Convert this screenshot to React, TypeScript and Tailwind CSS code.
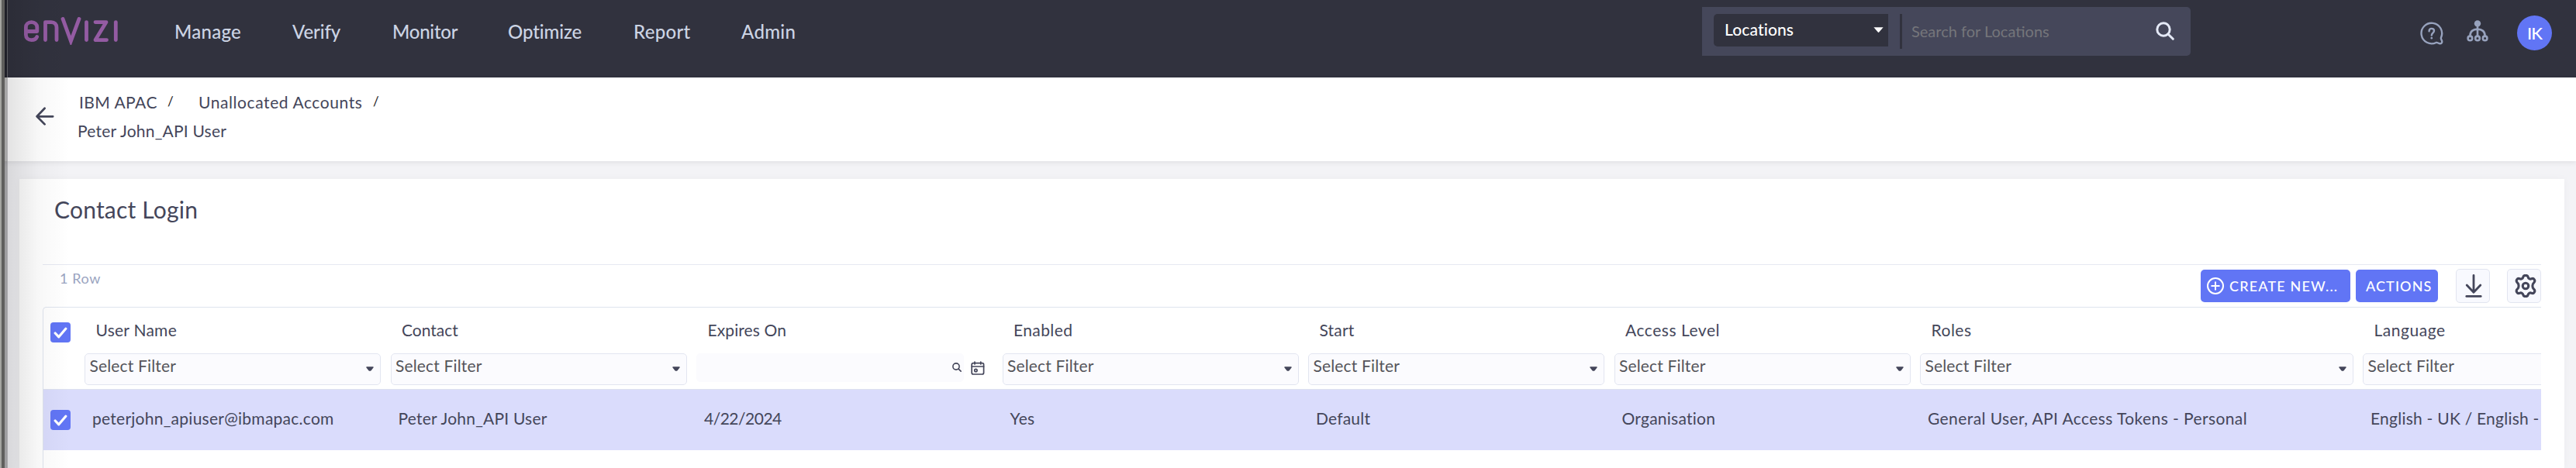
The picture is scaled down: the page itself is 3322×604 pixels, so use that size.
const NAV = [
  { label: "Manage", cls: "w-[152px] tracking-[0.25px]" },
  { label: "Verify", cls: "w-[129px] tracking-[-0.1px]" },
  { label: "Monitor", cls: "w-[149px] tracking-[-0.25px]" },
  { label: "Optimize", cls: "w-[162px] tracking-[-0.1px]" },
  { label: "Report", cls: "w-[139px] tracking-[0.3px]" },
  { label: "Admin", cls: "tracking-[0.3px]" },
];

type Column = {
  title: string;
  titleCls: string;
  value: string;
  valueCls: string;
  filter: "select" | "date";
};

const COLUMNS: Column[] = [
  { title: "User Name", titleCls: "tracking-[0.25px]", value: "peterjohn_apiuser@ibmapac.com", valueCls: "tracking-[0.26px]", filter: "select" },
  { title: "Contact", titleCls: "tracking-[0px]", value: "Peter John_API User", valueCls: "tracking-[0.22px]", filter: "select" },
  { title: "Expires On", titleCls: "tracking-[0.1px]", value: "4/22/2024", valueCls: "tracking-[-0.5px]", filter: "date" },
  { title: "Enabled", titleCls: "tracking-[0.4px]", value: "Yes", valueCls: "tracking-[0.34px]", filter: "select" },
  { title: "Start", titleCls: "tracking-[0.2px]", value: "Default", valueCls: "tracking-[0.2px]", filter: "select" },
  { title: "Access Level", titleCls: "tracking-[0.52px]", value: "Organisation", valueCls: "tracking-[0.24px]", filter: "select" },
  { title: "Roles", titleCls: "tracking-[0.5px]", value: "General User, API Access Tokens - Personal", valueCls: "tracking-[0.41px]", filter: "select" },
  { title: "Language", titleCls: "tracking-[0.55px]", value: "English - UK / English -", valueCls: "tracking-[0.24px]", filter: "select" },
];

const GRID = "grid grid-cols-[53px_repeat(6,394.5px)_571px_571px]";

function Logo() {
  return (
    <svg className="mt-[22px] h-9 w-[122px]" viewBox="0 0 122 36" fill="none" stroke="#945ba3" strokeWidth="4.8" strokeLinecap="round" strokeLinejoin="round">
      <path d="M2.4 18.5H16.8V13C16.8 9.5 13.9 6.6 9.6 6.6S2.4 9.5 2.4 13V23C2.4 27 5.3 29.6 9.6 29.6C13 29.6 15.6 28.2 16.6 25.6" />
      <path d="M27.5 29.6V6.6H35C39.4 6.6 42 9.3 42 13.5V29.6" />
      <path d="M50 2.4 60.4 31 71 2.4" strokeLinejoin="miter" />
      <path d="M80.5 6.6V29.6" />
      <path d="M92 6.6H106L92 29.6H106.5" />
      <path d="M118.3 6.6V29.6" />
    </svg>
  );
}

function Caret({ className }: { className: string }) {
  return (
    <svg className={className} viewBox="0 0 10 6" fill="currentColor">
      <path d="M1 .2H9C9.8.2 10 1 9.5 1.6L6.6 5.2C5.8 6 4.2 6 3.4 5.2L.5 1.6C0 1 .2.2 1 .2Z" />
    </svg>
  );
}

function SearchIcon({ className, stroke }: { className: string; stroke: number }) {
  return (
    <svg className={className} viewBox="0 0 24 24" fill="none" stroke="currentColor" strokeWidth={stroke} strokeLinecap="round">
      <circle cx="10" cy="10" r="8.2" />
      <path d="m16.2 16.2 6.1 6.1" />
    </svg>
  );
}

function Checkbox({ className }: { className: string }) {
  return (
    <div className={`ml-[9px] flex h-[26px] w-[26px] items-center justify-center rounded-[4px] bg-[#6175f5] ${className}`}>
      <svg className="h-[15px] w-[18px]" viewBox="0 0 18 15" fill="none" stroke="white" strokeWidth="3.2" strokeLinecap="round" strokeLinejoin="round">
        <path d="m2.2 8 4.6 4.8L15.8 2.2" />
      </svg>
    </div>
  );
}

function SelectFilter() {
  return (
    <div className="mr-[12.5px] flex h-[41px] justify-between rounded-[5px] border border-[#e2e5f0] bg-[#fbfbfe] pl-[5.5px] pr-2 pt-[3px]">
      <span className="leading-6 tracking-[0.16px] text-[#55555a]">Select Filter</span>
      <Caret className="mt-[13px] h-[6px] w-[10px] text-[#44465a]" />
    </div>
  );
}

function DateFilter() {
  return (
    <div className="flex h-[41px] text-[#44465a]">
      <div className="flex h-[37px] w-[345px] justify-end rounded-[5px] bg-[#fbfbfe] pr-[3px] pt-3">
        <SearchIcon className="h-3 w-3" stroke={3.2} />
      </div>
      <svg className="ml-[9px] mt-[10px] h-[18px] w-[18px]" viewBox="0 0 18 18" fill="none" stroke="currentColor" strokeWidth="1.7" strokeLinecap="round">
        <rect x="1.2" y="2.6" width="15.4" height="14.4" rx="2" />
        <path d="M1.2 7H16.6M5 1V4M12.8 1V4" />
        <circle cx="6.4" cy="12" r="1.7" />
      </svg>
    </div>
  );
}

function Header() {
  return (
    <header className="flex h-[100px] items-start bg-[#31323e] pl-[31px]">
      <Logo />
      <nav className="flex pl-[72px] pt-[27px] text-[24px] font-medium leading-7 text-[#ccd4e4]">
        {NAV.map((n) => (
          <span key={n.label} className={n.cls}>{n.label}</span>
        ))}
      </nav>
      <div className="ml-auto mt-[9px] flex h-[63px] w-[630px] rounded-r-[5px] bg-[#45475a] pl-[15px] pr-[21px] pt-[9px]">
        <div className="flex h-[42px] w-[225px] justify-between rounded-l-[5px] bg-[#31323e] pl-[14px] pr-[6px] text-white">
          <span className="pt-[8px] text-[21px] font-medium leading-6 tracking-[0.12px]">Locations</span>
          <svg className="mt-[17px] h-[7px] w-[13px]" viewBox="0 0 13 7" fill="currentColor">
            <path d="M.4.3H12.6L7.2 6.6Q6.5 7.3 5.8 6.6Z" />
          </svg>
        </div>
        <div className="ml-[15px] h-[45px] w-[3px] bg-[#31323e]" />
        <span className="pl-[12px] pt-[10px] text-[20px] leading-6 text-[#75767b]">Search for Locations</span>
        <SearchIcon className="ml-auto mt-[10px] h-6 w-6 text-[#e4e9f6]" stroke={3} />
      </div>
      <div className="flex w-[497px] pl-[296px]">
        <svg className="mt-7 h-[30px] w-[30px] text-[#97a2bd]" viewBox="0 0 30 30" fill="none" stroke="currentColor" strokeWidth="2.4" strokeLinecap="round" strokeLinejoin="round">
          <path d="M27 20.4A13.3 13.3 0 1 0 20.6 27C22.6 26.3 23.4 28.3 25.6 28.3C27.5 28.3 28.4 27.2 28.2 25.4C28 23.4 26.2 22.5 27 20.4Z" />
          <path d="M11.6 12.2C11.6 9.8 13 8.9 14.7 8.9C16.6 8.9 18 10 18 11.8C18 14.4 14.8 14.4 14.8 17.6" />
          <circle cx="14.8" cy="21.2" r=".6" fill="currentColor" strokeWidth="1.6" />
        </svg>
        <svg className="ml-[30px] mt-[26px] h-7 w-7 text-[#97a2bd]" viewBox="0 0 28 28" fill="none" stroke="currentColor" strokeWidth="2.6">
          <circle cx="14" cy="4.4" r="4.2" fill="currentColor" stroke="none" />
          <path d="M14 6V20M4.4 20.4C4.4 14.6 8 11.6 14 11.6S23.6 14.6 23.6 20.4" />
          <circle cx="4.4" cy="23.4" r="2.8" />
          <circle cx="14" cy="23.4" r="2.8" />
          <circle cx="23.6" cy="23.4" r="2.8" />
        </svg>
        <div className="ml-[37px] mt-5 flex h-[45px] w-[45px] items-center justify-center rounded-full bg-[#6175f5] text-[22px] font-medium leading-6 tracking-[-1px] text-white">
          IK
        </div>
      </div>
    </header>
  );
}

function Slash() {
  return <span className="-mt-px w-[6px] text-[17px] text-[#222]">/</span>;
}

function Breadcrumb() {
  return (
    <div className="relative z-10 flex h-[108px] bg-white text-[21px] leading-6 text-[#44465a] shadow-[0_2px_6px_rgba(40,40,60,0.09)]">
      <svg className="ml-[46px] mt-[38px] h-6 w-6" viewBox="0 0 24 24" fill="none" stroke="currentColor" strokeWidth="2.7" strokeLinecap="round" strokeLinejoin="round">
        <path d="M22.2 12.3H1.6M11.6 1.8 1.6 12.3 11.6 22.4" />
      </svg>
      <div className="pl-[30px] pt-[20px]">
        <div className="flex">
          <span className="w-[116px] pl-[2px] tracking-[0.45px]">IBM APAC</span>
          <Slash />
          <span className="ml-[34px] w-[225px] tracking-[0.58px]">Unallocated Accounts</span>
          <Slash />
        </div>
        <div className="mt-[13px] tracking-[0.22px]">Peter John_API User</div>
      </div>
    </div>
  );
}

function Toolbar() {
  return (
    <div className="flex h-[55px] items-start border-t border-[#e6e8f2]">
      <span className="pl-[22px] pt-[5px] text-[18px] leading-6 tracking-[0.6px] text-[#9aa4c0]">1 Row</span>
      <div className="ml-auto mt-[6px] flex h-[42px] w-[193px] gap-[7px] rounded-[5px] bg-[#6175f5] pl-2 text-[18px] font-medium leading-6 tracking-[1.17px] text-white">
        <svg className="mt-[10px] h-[22px] w-[22px]" viewBox="0 0 22 22" fill="none" stroke="currentColor" strokeWidth="2" strokeLinecap="round">
          <circle cx="11" cy="11" r="10" />
          <path d="M11 6.2V15.8M6.2 11H15.8" />
        </svg>
        <span className="whitespace-nowrap pt-[9px]">CREATE NEW...</span>
      </div>
      <div className="ml-[7px] mt-[6px] h-[42px] w-[106px] rounded-[5px] bg-[#6175f5] pl-[13px] pt-[9px] text-[18px] font-medium leading-6 tracking-[1.1px] text-white">
        ACTIONS
      </div>
      <div className="ml-[23px] mt-[5px] flex h-11 w-11 items-center justify-center rounded-[5px] border border-[#e2e5f0] bg-[#f8f9fe] pl-px text-[#44465a]">
        <svg className="h-[30px] w-[22px]" viewBox="0 0 22 30" fill="none" stroke="currentColor" strokeWidth="2.8" strokeLinecap="round" strokeLinejoin="round">
          <path d="M11 1.5V23M2.2 14 11 23.2 19.8 14" />
          <path d="M1.8 28.4H20.2" />
        </svg>
      </div>
      <div className="ml-[22px] mt-[5px] flex h-11 w-11 items-center justify-center rounded-[5px] border border-[#e2e5f0] bg-[#f8f9fe] pl-[3px] text-[#44465a]">
        <svg className="h-[30px] w-[30px] shrink-0" viewBox="1 1 26 27" fill="none" stroke="currentColor" strokeWidth="2.8" strokeLinejoin="round">
          <path d="M11.2 4C11.8 1.6 16.2 1.6 16.8 4C17.1 6 19 7 20.8 6.2C23.7 5 25.9 8.6 23.6 10.7C22.8 11.4 22 12.2 22 14.5C22 16.8 22.8 17.6 23.6 18.3C25.9 20.4 23.7 24 20.8 22.8C19 22 17.1 23 16.8 25C16.2 27.4 11.8 27.4 11.2 25C10.9 23 9 22 7.2 22.8C4.3 24 2.1 20.4 4.4 18.3C5.2 17.6 6 16.8 6 14.5C6 12.2 5.2 11.4 4.4 10.7C2.1 8.6 4.3 5 7.2 6.2C9 7 10.9 6 11.2 4Z" />
          <circle cx="14" cy="14.5" r="3.4" />
        </svg>
      </div>
    </div>
  );
}

function Table() {
  return (
    <div className="h-[208px] overflow-hidden rounded-tl-[5px] border-l border-t border-[#dfe4ee] text-[21px] leading-6 text-[#44465a]">
      <div className={`${GRID} h-[106px] border-b border-[#dde1ee]`}>
        <Checkbox className="mt-[19px]" />
        {COLUMNS.map((c) => (
          <div key={c.title} className="pt-[17px]">
            <div className={`mb-[18px] pl-[14.5px] ${c.titleCls}`}>{c.title}</div>
            {c.filter === "select" ? <SelectFilter /> : <DateFilter />}
          </div>
        ))}
      </div>
      <div className={`${GRID} h-[78px] bg-[#dadcfc]`}>
        <Checkbox className="mt-[26px]" />
        {COLUMNS.map((c) => (
          <div key={c.title} className={`whitespace-nowrap pl-[10px] pt-[25px] ${c.valueCls}`}>{c.value}</div>
        ))}
      </div>
    </div>
  );
}

export default function App() {
  return (
    <div className="relative h-[604px] w-[3322px] overflow-hidden bg-[#f3f3f6] font-['Lato',sans-serif]">
      <Header />
      <Breadcrumb />
      <main className="ml-[25px] mr-[15px] mt-[23px] h-[373px] bg-white pl-[30px] pr-[30px] pt-[21px] shadow-[0_0_10px_rgba(40,40,60,0.03)]">
        <h1 className="mb-[53px] pl-[15px] text-[30px] leading-9 tracking-[0.2px] text-[#44465a]">Contact Login</h1>
        <Toolbar />
        <Table />
      </main>
      <div className="pointer-events-none absolute inset-y-0 left-0 z-20 flex">
        <div className="w-[2px] bg-[#a4a5a0]" />
        <div className="w-1 bg-[#5f5f5d]" />
        <div className="w-[3px] bg-black/35" />
        <div className="w-px bg-[#77777a]/60" />
        <div className="w-20 bg-linear-to-r from-black/11 via-black/3 to-transparent" />
      </div>
    </div>
  );
}
